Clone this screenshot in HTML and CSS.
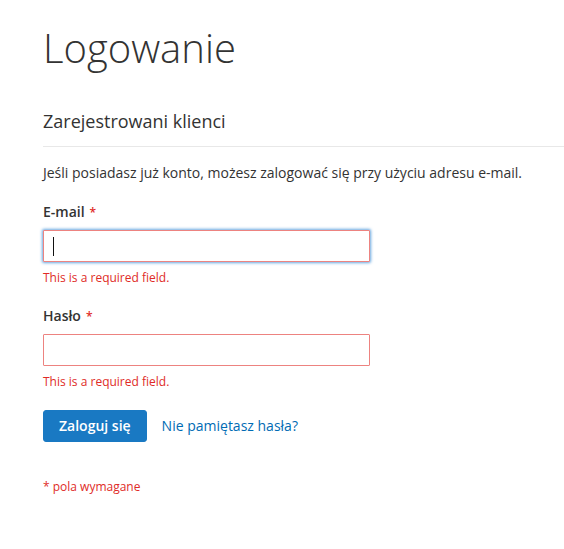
FILE: index.html
```html
<!DOCTYPE html>
<html lang="pl">
<head>
<meta charset="utf-8">
<title>Logowanie</title>
<link rel="stylesheet" href="styles.css">
</head>
<body>
<main class="page">
  <h1 class="page-title">Logowanie</h1>
  <div class="block">
    <h2 class="block-title">Zarejestrowani klienci</h2>
    <p class="intro">Jeśli posiadasz już konto, możesz zalogować się przy użyciu adresu e-mail.</p>
    <form class="login-form">
      <div class="field field-first">
        <label class="label" for="email">E-mail<span class="req">*</span></label>
        <div class="control">
          <input class="input input-focus" id="email" type="email">
          <span class="caret"></span>
        </div>
        <div class="error">This is a required field.</div>
      </div>
      <div class="field">
        <label class="label" for="pass">Hasło<span class="req">*</span></label>
        <div class="control">
          <input class="input" id="pass" type="password">
        </div>
        <div class="error">This is a required field.</div>
      </div>
      <div class="actions">
        <button class="btn-primary" type="button">Zaloguj się</button>
        <a class="link" href="#">Nie pamiętasz hasła?</a>
      </div>
      <div class="required-note">* pola wymagane</div>
    </form>
  </div>
</main>
</body>
</html>
```

FILE: styles.css
```css
html, body {
  margin: 0;
  padding: 0;
  background: #fff;
}
body {
  font-family: "Open Sans", "Liberation Sans", sans-serif;
  color: #333;
  font-size: 14px;
  line-height: 20px;
}
.page {
  padding: 26px 0 0 43px;
}
.page-title {
  margin: 0;
  font-size: 40px;
  line-height: 44px;
  font-weight: 300;
  color: #333;
}
.block {
  margin-top: 40px;
}
.block-title {
  margin: 0;
  font-size: 18px;
  line-height: 22px;
  font-weight: 400;
  padding-bottom: 14px;
  border-bottom: 1px solid #e8e8e8;
}
.intro {
  margin: 16px 0 0;
}
.login-form {
  margin: 0;
}
.field {
  margin-top: 20px;
}
.field-first {
  margin-top: 19px;
}
.label {
  display: block;
  height: 20px;
  font-weight: 600;
  line-height: 20px;
}
.req {
  color: #e02b27;
  font-size: 12px;
  font-weight: 600;
  line-height: 1;
  margin-left: 5px;
}
.control {
  position: relative;
  margin-top: 8px;
  width: 327px;
}
.input {
  display: block;
  box-sizing: border-box;
  width: 327px;
  height: 32px;
  margin: 0;
  padding: 0 9px;
  border: 1px solid #ed8380;
  border-radius: 1px;
  background: #fff;
  font-family: inherit;
  font-size: 14px;
  outline: none;
}
.input-focus {
  box-shadow: 0 0 3px 1px #68a8e0;
}
.caret {
  position: absolute;
  left: 10px;
  top: 7px;
  width: 1px;
  height: 19px;
  background: #111;
}
.error {
  margin-top: 8px;
  color: #e02b27;
  font-size: 12px;
  line-height: 16px;
}
.actions {
  display: flex;
  align-items: center;
  gap: 15px;
  margin-top: 20px;
}
.btn-primary {
  box-sizing: border-box;
  height: 32px;
  padding: 0 15px;
  border: 1px solid #1979c3;
  border-radius: 3px;
  background: #1979c3;
  color: #fff;
  font-family: inherit;
  font-size: 14px;
  font-weight: 600;
  line-height: 16px;
  cursor: pointer;
}
.link {
  color: #006bb4;
  text-decoration: none;
  font-size: 14px;
}
.required-note {
  margin-top: 37px;
  color: #e02b27;
  font-size: 12px;
  line-height: 16px;
}
```
